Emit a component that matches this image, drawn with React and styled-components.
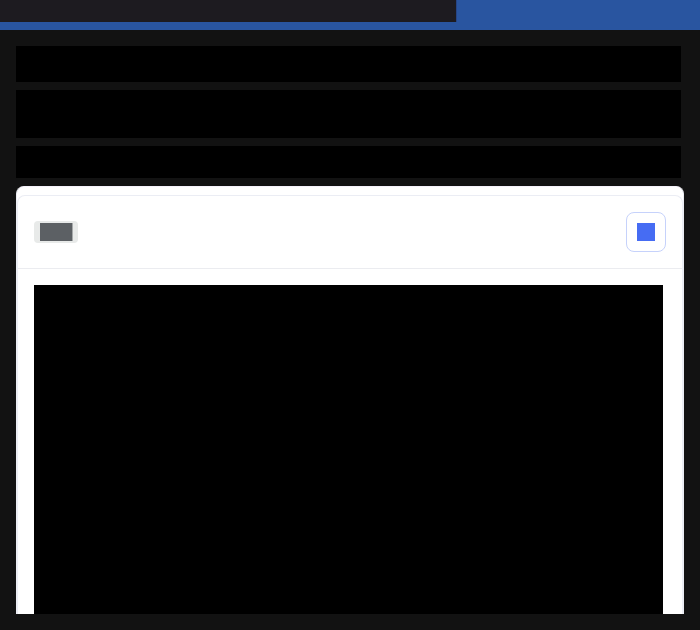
import React from "react";
import styled, { createGlobalStyle } from "styled-components";

const GlobalStyle = createGlobalStyle`
  *, *::before, *::after { box-sizing: border-box; }
  body { margin: 0; background: #121212; overflow: hidden; }
`;

const Page = styled.div`
  height: 630px;
  display: flex;
  flex-direction: column;
  background: #121212;
  overflow: hidden;
`;

const TopBar = styled.header`
  flex: none;
  height: 30px;
  background: #2955a0;
`;

const TopBarTitle = styled.div`
  width: 457px;
  height: 22px;
  border-right: 1px solid #264585;
  background: #1d1b20;
`;

const Content = styled.main`
  flex: 1;
  min-height: 0;
  margin: 16px;
  display: flex;
  flex-direction: column;
  gap: 8px;
  overflow: hidden;
`;

const TextBlock = styled.div`
  flex: none;
  width: 665px;
  height: ${(p) => p.$height}px;
  background: #000;
`;

const Card = styled.section`
  flex: 1;
  min-height: 0;
  padding-top: 8px;
  border: 1px solid #ebedf3;
  border-top-color: #f5f2fb;
  border-bottom: 0;
  border-radius: 8px 8px 0 0;
  background: #fff;
`;

const Panel = styled.div`
  height: 100%;
  display: flex;
  flex-direction: column;
  border: 1px solid #ebedf4;
  border-bottom: 0;
  border-radius: 8px 8px 0 0;
`;

const PanelHeader = styled.div`
  flex: none;
  height: 73px;
  padding: 0 16px;
  display: flex;
  align-items: center;
  justify-content: space-between;
  border-bottom: 1px solid #ebecf0;
`;

const Badge = styled.div`
  width: 44px;
  height: 22px;
  padding: 2px 5px 2px 6px;
  border-radius: 4px;
  background: #e8eae9;
`;

const BadgeLabel = styled.div`
  height: 18px;
  border-right: 1px solid #a6a9aa;
  background: #5c6064;
`;

const IconButton = styled.button`
  width: 40px;
  height: 40px;
  padding: 0;
  display: grid;
  place-items: center;
  border: 1px solid #c6d2fb;
  border-radius: 8px;
  background: #fff;
`;

const ButtonIcon = styled.span`
  width: 18px;
  height: 18px;
  background: #466cf3;
`;

const PanelBody = styled.div`
  flex: 1;
  min-height: 0;
  padding: 16px 19px 0 16px;
`;

const CodeBlock = styled.div`
  height: 100%;
  background: #000;
`;

export default function App() {
  return (
    <>
      <GlobalStyle />
      <Page>
        <TopBar>
          <TopBarTitle />
        </TopBar>
        <Content>
          <TextBlock $height={36} />
          <TextBlock $height={48} />
          <TextBlock $height={32} />
          <Card>
            <Panel>
              <PanelHeader>
                <Badge>
                  <BadgeLabel />
                </Badge>
                <IconButton type="button">
                  <ButtonIcon />
                </IconButton>
              </PanelHeader>
              <PanelBody>
                <CodeBlock />
              </PanelBody>
            </Panel>
          </Card>
        </Content>
      </Page>
    </>
  );
}
